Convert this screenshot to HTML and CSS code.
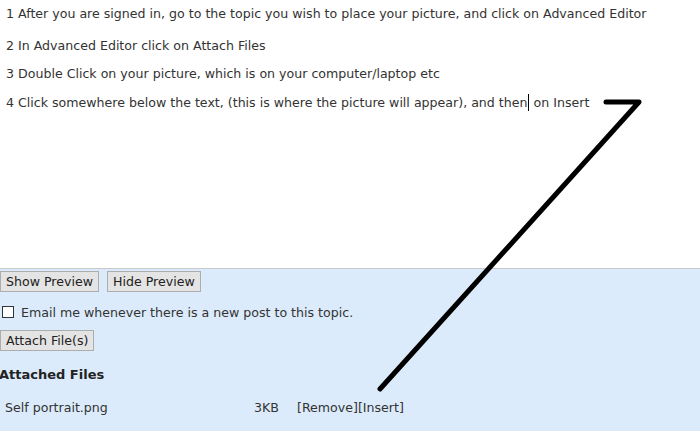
FILE: index.html
```html
<!DOCTYPE html>
<html>
<head>
<meta charset="utf-8">
<link rel="stylesheet" href="styles.css">
</head>
<body>
<div class="page">
  <div class="editor">
    <p class="step first">1 After you are signed in, go to the topic you wish to place your picture, and click on Advanced Editor</p>
    <p class="step">2 In Advanced Editor click on Attach Files</p>
    <p class="step">3 Double Click on your picture, which is on your computer/laptop etc</p>
    <p class="step">4 Click somewhere below the text, (this is where the picture will appear), and then<span class="caret"></span> on Insert</p>
  </div>
  <div class="panel">
    <div class="buttons">
      <button class="btn">Show Preview</button>
      <button class="btn">Hide Preview</button>
    </div>
    <label class="notify"><span class="box"></span>Email me whenever there is a new post to this topic.</label>
    <div class="attach-row"><button class="btn">Attach File(s)</button></div>
    <h3 class="att-title">Attached Files</h3>
    <div class="file-row">
      <span class="fname">Self portrait.png</span>
      <span class="fsize">3KB</span>
      <span class="factions">[Remove][Insert]</span>
    </div>
  </div>
  <svg class="scribble" width="700" height="432" viewBox="0 0 700 432">
    <polyline points="606,102 639,102 380,389" fill="none" stroke="#000" stroke-width="5" stroke-linecap="round" stroke-linejoin="round"/>
  </svg>
</div>
</body>
</html>
```
FILE: styles.css
```css
html, body {
  margin: 0;
  padding: 0;
}
body {
  font-family: "DejaVu Sans", Verdana, sans-serif;
  font-size: 12.6px;
  color: #333;
  background: #fff;
}
.page {
  position: relative;
  width: 700px;
  height: 432px;
  overflow: hidden;
}
.editor {
  height: 268px;
  box-sizing: border-box;
  padding: 6px 0 0 6px;
}
.step {
  margin: 0 0 12px 0;
  line-height: 16px;
  white-space: nowrap;
}
.step.first {
  margin-bottom: 16px;
}
.caret {
  display: inline-block;
  width: 1px;
  height: 17px;
  background: #000;
  vertical-align: -4px;
  margin: 0 1px 0 0;
}
.panel {
  border-top: 1px solid #c9c9c9;
  background: #dcebfb;
  height: 163px;
  padding-top: 2px;
  box-sizing: border-box;
}
.buttons {
  display: flex;
  gap: 8px;
}
.btn {
  font-family: inherit;
  font-size: 12.6px;
  color: #222;
  background: #e4e4e4;
  border: 1px solid #adadad;
  border-radius: 0;
  height: 21px;
  padding: 0 5px;
  margin: 0;
}
.notify {
  display: flex;
  align-items: center;
  gap: 7px;
  margin-top: 12px;
  padding-left: 2px;
  height: 16px;
}
.box {
  width: 10px;
  height: 10px;
  border: 1px solid #333;
  background: #fff;
}
.attach-row {
  margin-top: 10px;
}
.att-title {
  margin: 15px 0 0 -1px;
  font-size: 13px;
  font-weight: bold;
  line-height: 18px;
  color: #222;
}
.file-row {
  display: flex;
  margin-top: 16px;
  padding-left: 5px;
  line-height: 16px;
}
.fname { width: 249px; }
.fsize { width: 43px; }
.scribble {
  position: absolute;
  left: 0;
  top: 0;
  pointer-events: none;
}
```
